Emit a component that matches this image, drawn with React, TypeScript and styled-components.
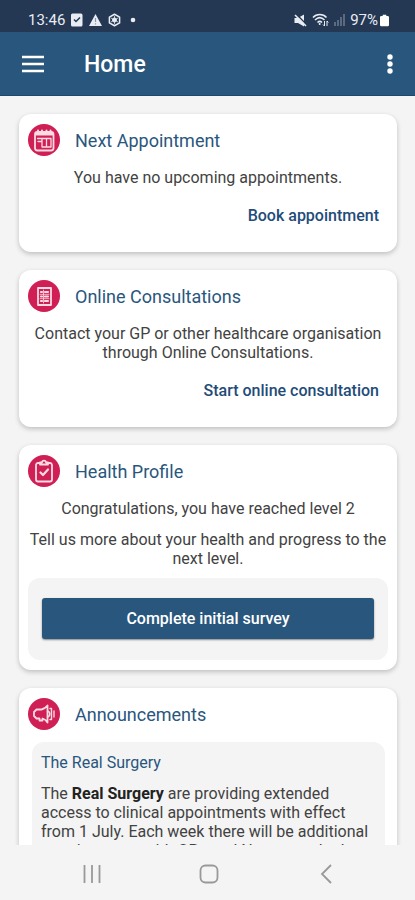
import React from "react";
import styled, { createGlobalStyle } from "styled-components";

const navy = "#29567d";
const link = "#1f4c79";

const GlobalStyle = createGlobalStyle`
  *, *::before, *::after { box-sizing: border-box; }
  html, body, #root { height: 100%; }
  body {
    margin: 0;
    background: #f4f4f4;
    color: #424242;
    font-family: Roboto, "Liberation Sans", sans-serif;
  }
  h1, h2, h3, p { margin: 0; }
  svg { display: block; flex: none; }
`;

const Screen = styled.div`
  display: flex;
  flex-direction: column;
  height: 100vh;
`;

const StatusBar = styled.div`
  flex: none;
  display: flex;
  justify-content: space-between;
  align-items: center;
  height: 32px;
  padding: 8px 26px 0 28px;
  background: #243753;
  color: #e9edf3;
  font-size: 15px;
  line-height: 16px;
`;

const StatusGroup = styled.div<{ $gap: number }>`
  display: flex;
  align-items: center;
  gap: ${(p) => p.$gap}px;
`;

const AppBar = styled.header`
  flex: none;
  display: flex;
  align-items: center;
  height: 64px;
  padding: 0 16px;
  background: ${navy};
  border-bottom: 1px solid #1d476c;
  color: #fff;
`;

const AppTitle = styled.h1`
  flex: 1;
  margin-left: 34px;
  padding-top: 2px;
  font-size: 23px;
  line-height: 28px;
  font-weight: 500;
`;

const IconButton = styled.button<{ $width: number }>`
  display: flex;
  align-items: center;
  justify-content: center;
  width: ${(p) => p.$width}px;
  height: 40px;
  padding: 0;
  border: 0;
  background: none;
  color: inherit;
  cursor: pointer;
`;

const Content = styled.main`
  flex: 1;
  min-height: 0;
  overflow-y: auto;
  scrollbar-width: none;
  display: flex;
  flex-direction: column;
  gap: 18px;
  padding: 18px 18px 18px 19px;
`;

const Card = styled.section`
  flex: none;
  padding: 10px 9px;
  border-radius: 12px;
  background: #fff;
  box-shadow: 0 2px 5px rgba(0, 0, 0, 0.22);
`;

const CardHeader = styled.div`
  display: flex;
  align-items: center;
  gap: 15px;
  height: 32px;
`;

const CardTitle = styled.h2`
  padding-top: 1px;
  color: ${navy};
  font-size: 18px;
  line-height: 24px;
  font-weight: 400;
`;

const Message = styled.p<{ $top: number }>`
  margin-top: ${(p) => p.$top}px;
  text-align: center;
  font-size: 16px;
  line-height: 19px;
`;

const CardActions = styled.div`
  display: flex;
  justify-content: flex-end;
  padding: 19px 9px 17px;
`;

const ActionLink = styled.a`
  color: ${link};
  font-size: 16px;
  line-height: 19px;
  font-weight: 500;
  text-decoration: none;
`;

const Panel = styled.div`
  margin-top: 10px;
  padding: 20px 14px 21px;
  border-radius: 12px;
  background: #f4f4f4;
`;

const PrimaryButton = styled.button`
  display: block;
  width: 100%;
  height: 41px;
  border: 0;
  border-radius: 3px;
  background: ${navy};
  box-shadow: 0 1px 2px rgba(0, 0, 0, 0.45);
  color: #fff;
  font: 500 16px/20px Roboto, "Liberation Sans", sans-serif;
  cursor: pointer;
`;

const Notice = styled.article`
  margin: 12px 3px 0 4px;
  padding: 11px 9px;
  border-radius: 12px;
  background: #f4f4f4;
`;

const NoticeTitle = styled.h3`
  color: ${navy};
  font-size: 16px;
  line-height: 20px;
  font-weight: 400;
`;

const NoticeText = styled.p`
  margin-top: 11px;
  font-size: 16px;
  line-height: 19px;

  b { color: #222; }
`;

const NavBar = styled.nav`
  flex: none;
  display: grid;
  grid-template-columns: repeat(3, 117px);
  justify-content: center;
  align-items: center;
  height: 55px;
  padding: 3px 0 0 3px;
  background: #f4f4f4;
  color: #999;
`;

const NavButton = styled.button`
  display: flex;
  justify-content: center;
  padding: 8px 0;
  border: 0;
  background: none;
  color: inherit;
  cursor: pointer;
`;

function Badge({ children }: { children: React.ReactNode }) {
  return (
    <svg width="32" height="32" viewBox="0 0 32 32" fill="none" stroke="#fbdbe4" strokeWidth="1.800" strokeLinejoin="round" strokeLinecap="round" aria-hidden="true">
      <circle cx="16" cy="16" r="16" fill="#cf1f54" stroke="none" />
      {children}
    </svg>
  );
}

const CalendarBadge = () => (
  <Badge>
    <rect x="7" y="8" width="18.500" height="18.500" rx="2.500" />
    <path d="M7.500 8.500H25V11.500H7.500Z" fill="#fbdbe4" stroke="none" />
    <path d="M10 6.500V9M14 6.500V9M18.500 6.500V9M22.500 6.500V9" strokeWidth="2" />
    <path d="M9.500 14.500H23M10 17.500H14V23H23V14.500M14 15V18M18.500 15V23" strokeWidth="1.300" />
  </Badge>
);

const FormBadge = () => (
  <Badge>
    <rect x="10" y="8" width="13" height="17" />
    <path d="M13 12H14M17 12H20M13 16.500H14M17 16.500H20M13 21H14M17 21H20" strokeWidth="2.200" />
    <path d="M12 14.300H21M12 18.700H21M15.500 10V23" strokeWidth=".8" />
  </Badge>
);

const ClipboardBadge = () => (
  <Badge>
    <path d="M12 8H10C8.900 8 8 8.900 8 10V24.500C8 25.600 8.900 26.500 10 26.500H22C23.100 26.500 24 25.600 24 24.500V10C24 8.900 23.100 8 22 8H20" />
    <path d="M12 9.500V7.500H14C14.200 4.900 17.800 4.900 18 7.500H20V9.500Z" />
    <path d="M12.500 17.500L15 20L20 14.500" strokeWidth="2.200" />
  </Badge>
);

const SpeakerBadge = () => (
  <Badge>
    <path d="M8.500 11.500H13.500C16 11 18 9.500 19.500 7.500V24.500C18 22 16.500 21 14.500 20.500V22.500H11.500V20.500H8.500L6 18V14Z" />
    <path d="M19.500 13C22.500 13.500 22.500 18.500 19.500 19M22 10.500H23.500V21.500H22M26 13V19" strokeWidth="1.400" />
  </Badge>
);

export default function App() {
  return (
    <Screen>
      <GlobalStyle />
      <StatusBar>
        <StatusGroup $gap={6}>
          <span>13:46</span>
          <svg width="12" height="14" viewBox="0 0 12 14">
            <rect y="0.500" width="11.500" height="13" rx="1.500" fill="#e9edf3" />
            <path d="M3 6.500L5 8.500L9 4.500" fill="none" stroke="#243753" strokeWidth="1.500" />
          </svg>
          <svg width="13" height="12" viewBox="0 0 13 12">
            <path d="M6.500 0L13 12H0Z" fill="#e9edf3" />
            <path d="M6.500 4V8M6.500 9.300V10.500" stroke="#8a96a8" strokeWidth="1.200" />
          </svg>
          <svg width="13" height="14" viewBox="0 0 14 14" fill="none" stroke="#e9edf3">
            <path d="M7 .8L12.500 3.900V10.100L7 13.200L1.500 10.100V3.900Z" strokeWidth="1.600" strokeLinejoin="round" />
            <circle cx="7" cy="7" r="2.200" fill="#e9edf3" />
            <path d="M7 2.500V11.500M3 4.700L11 9.300M11 4.700L3 9.300" strokeWidth=".8" />
          </svg>
          <svg width="12" height="6" viewBox="0 0 12 6">
            <circle cx="6" cy="3" r="2.300" fill="#e9edf3" />
          </svg>
        </StatusGroup>
        <StatusGroup $gap={5}>
          <svg width="13" height="13" viewBox="0 0 13 13">
            <path d="M0.500 4H4L10 .5V12.500L4 9H.5Z" fill="#e9edf3" />
            <path d="M2 0L13 11" stroke="#243753" strokeWidth="1.500" />
            <path d="M1 1L12 12" stroke="#e9edf3" strokeWidth="1.600" />
          </svg>
          <svg width="17" height="14" viewBox="0 0 17 14" fill="none" stroke="#e9edf3" strokeWidth="1.500">
            <path d="M1 4.500C4.500 0.500 11 0.500 14.500 4.500M3 7C6 4 9.500 4 12.500 7M5.500 9.500C7 8 8.500 8 10 9.500" />
            <circle cx="7.700" cy="11" r="1" fill="#e9edf3" stroke="none" />
            <path d="M12.500 8V13M11 11.500L12.500 13M15 13V8M16.300 9.500L15 8" strokeWidth="1" />
          </svg>
          <svg width="11" height="12" viewBox="0 0 11 12" stroke="#5a6a83" strokeWidth="2">
            <path d="M1 8V12M4 6V12M7 3V12M10 0V12" />
          </svg>
          <StatusGroup $gap={2}>
            <span>97%</span>
            <svg width="9" height="13" viewBox="0 0 10 13" fill="#fff">
              <path d="M3 0H7V1.500H8.500Q10 1.500 10 3V11.500Q10 13 8.500 13H1.500Q0 13 0 11.500V3Q0 1.500 1.500 1.500H3Z" />
            </svg>
          </StatusGroup>
        </StatusGroup>
      </StatusBar>

      <AppBar>
        <IconButton $width={34} aria-label="Open menu">
          <svg width="24" height="18" viewBox="0 0 24 18" stroke="#fff" strokeWidth="2.500">
            <path d="M1 2H23M1 9H23M1 16H23" />
          </svg>
        </IconButton>
        <AppTitle>Home</AppTitle>
        <IconButton $width={18} aria-label="More options">
          <svg width="6" height="20" viewBox="0 0 6 20" fill="#fff">
            <circle cx="3" cy="3" r="2.700" />
            <circle cx="3" cy="10" r="2.700" />
            <circle cx="3" cy="17" r="2.700" />
          </svg>
        </IconButton>
      </AppBar>

      <Content>
        <Card>
          <CardHeader><CalendarBadge /><CardTitle>Next Appointment</CardTitle></CardHeader>
          <Message $top={12}>You have no upcoming appointments.</Message>
          <CardActions><ActionLink href="#book">Book appointment</ActionLink></CardActions>
        </Card>

        <Card>
          <CardHeader><FormBadge /><CardTitle>Online Consultations</CardTitle></CardHeader>
          <Message $top={12}>Contact your GP or other healthcare organisation through Online Consultations.</Message>
          <CardActions><ActionLink href="#consultation">Start online consultation</ActionLink></CardActions>
        </Card>

        <Card>
          <CardHeader><ClipboardBadge /><CardTitle>Health Profile</CardTitle></CardHeader>
          <Message $top={12}>Congratulations, you have reached level 2</Message>
          <Message $top={12}>Tell us more about your health and progress to the next level.</Message>
          <Panel><PrimaryButton>Complete initial survey</PrimaryButton></Panel>
        </Card>

        <Card>
          <CardHeader><SpeakerBadge /><CardTitle>Announcements</CardTitle></CardHeader>
          <Notice>
            <NoticeTitle>The Real Surgery</NoticeTitle>
            <NoticeText>
              The <b>Real Surgery</b> are providing extended access to clinical appointments with effect from 1 July. Each week there will be additional appointments with GPs and Nurses and other staff.
            </NoticeText>
          </Notice>
        </Card>
      </Content>

      <NavBar aria-label="System navigation">
        <NavButton aria-label="Recent apps">
          <svg width="18" height="18" viewBox="0 0 18 18" stroke="currentColor" strokeWidth="1.800">
            <path d="M1.500 0V18M9 0V18M16.500 0V18" />
          </svg>
        </NavButton>
        <NavButton aria-label="Home screen">
          <svg width="20" height="20" viewBox="0 0 20 20" fill="none" stroke="currentColor" strokeWidth="1.800">
            <rect x="1.500" y="1.500" width="17" height="17" rx="5" />
          </svg>
        </NavButton>
        <NavButton aria-label="Back">
          <svg width="12" height="20" viewBox="0 0 12 20" fill="none" stroke="currentColor" strokeWidth="1.800">
            <path d="M11 1L2 10L11 19" />
          </svg>
        </NavButton>
      </NavBar>
    </Screen>
  );
}
